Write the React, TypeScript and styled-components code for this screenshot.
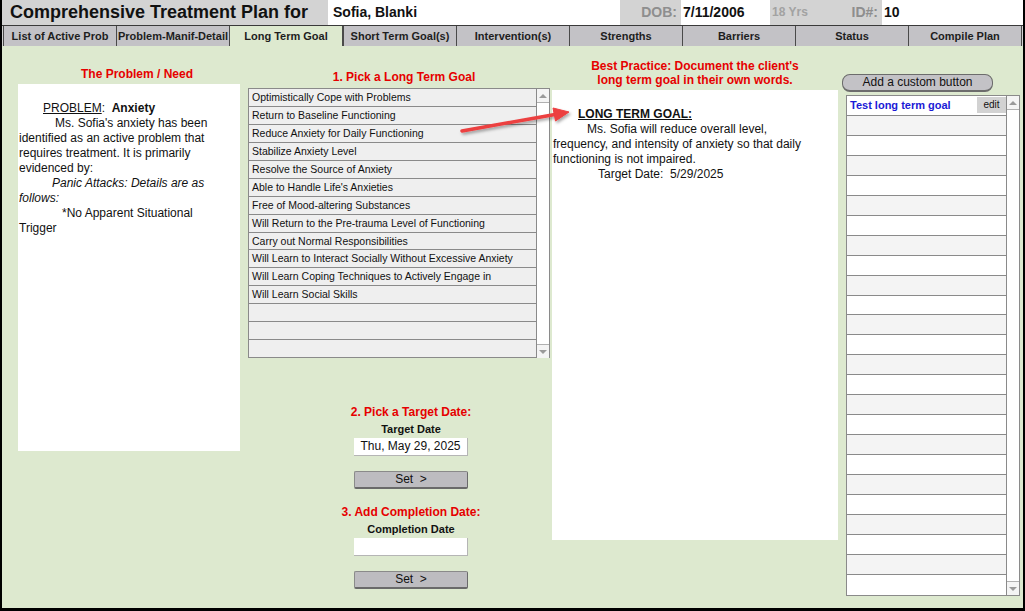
import styled, { createGlobalStyle } from "styled-components";

const GlobalStyle = createGlobalStyle`
  html, body {
    margin: 0;
    padding: 0;
  }
  body {
    font-family: "Liberation Sans", Arial, sans-serif;
    background: #000;
  }
`;

const Frame = styled.div`
  width: 1025px;
  height: 611px;
  box-sizing: border-box;
  border: 2px solid #000;
  border-top: 0;
  border-bottom-width: 3px;
  background: #dde9cf;
  display: flex;
  flex-direction: column;
  overflow: hidden;
`;

const Header = styled.div`
  height: 25px;
  display: flex;
  background: #d3d3d3;
  flex-shrink: 0;
`;

const Title = styled.div`
  width: 326px;
  box-sizing: border-box;
  padding-left: 8px;
  font-size: 18px;
  font-weight: bold;
  line-height: 25px;
  color: #111;
  white-space: nowrap;
`;

const NameField = styled.div`
  width: 292px;
  box-sizing: border-box;
  padding-left: 5px;
  background: #fff;
  font-size: 14px;
  font-weight: bold;
  line-height: 25px;
  color: #111;
`;

const InfoLabel = styled.div<{ $w: number }>`
  width: ${(p) => p.$w}px;
  box-sizing: border-box;
  padding-right: 4px;
  text-align: right;
  font-size: 14px;
  font-weight: bold;
  line-height: 25px;
  color: #8e8e8e;
`;

const InfoGap = styled.div`
  width: 112px;
  box-sizing: border-box;
  display: flex;
  justify-content: space-between;
  padding: 0 4px 0 2px;
  line-height: 25px;
  font-weight: bold;
  color: #8e8e8e;
  .age {
    font-size: 12px;
    color: #a2a2a2;
  }
  .id {
    font-size: 14px;
  }
`;

const InfoValue = styled.div<{ $w?: number }>`
  ${(p) => (p.$w ? `width: ${p.$w}px;` : "flex: 1;")}
  box-sizing: border-box;
  padding-left: 2px;
  background: #fff;
  font-size: 14px;
  font-weight: bold;
  line-height: 25px;
  color: #111;
`;

const TabRow = styled.div`
  height: 21px;
  display: flex;
  padding: 0 1px;
  background: #d3d3d3;
  border-top: 1px solid #3a3a3a;
  box-sizing: border-box;
  flex-shrink: 0;
`;

const Tab = styled.div<{ $active?: boolean }>`
  flex: 1;
  box-sizing: border-box;
  background: ${(p) => (p.$active ? "#dde9cf" : "#c3c2c6")};
  border-left: 1px solid #4a4a4a;
  border-right: ${(p) => (p.$active ? "1px solid #4a4a4a" : "0")};
  font-size: 11px;
  font-weight: bold;
  color: #1e1e1e;
  text-align: center;
  line-height: 20px;
  white-space: nowrap;
  &:last-child {
    border-right: 1px solid #4a4a4a;
  }
`;

const Main = styled.div`
  flex: 1;
  position: relative;
  display: flex;
  align-items: flex-start;
  padding-left: 16px;
`;

const Heading = styled.div<{ $shift?: number }>`
  padding-left: ${(p) => p.$shift ?? 0}px;
  color: #e60000;
  font-size: 12px;
  font-weight: bold;
  line-height: 14px;
  text-align: center;
`;

const Column = styled.div<{ $w: number; $top: number; $gap?: number }>`
  width: ${(p) => p.$w}px;
  padding-top: ${(p) => p.$top}px;
  margin-left: ${(p) => p.$gap ?? 0}px;
  display: flex;
  flex-direction: column;
  flex-shrink: 0;
`;

const MemoBox = styled.div<{ $h: number; $mt: number }>`
  height: ${(p) => p.$h}px;
  margin-top: ${(p) => p.$mt}px;
  background: #fff;
  box-sizing: border-box;
  padding: 17px 20px 0 1px;
  font-size: 12px;
  line-height: 15px;
  color: #111;
`;

const Para = styled.div<{ $indent: number; $italic?: boolean }>`
  text-indent: ${(p) => p.$indent}px;
  font-style: ${(p) => (p.$italic ? "italic" : "normal")};
  white-space: pre-wrap;
`;

const GoalList = styled.div`
  margin-top: 4px;
  height: 270px;
  display: flex;
  border: 1px solid #8a8a8a;
  border-bottom: 0;
  box-sizing: border-box;
  background: #efefef;
`;

const GoalRows = styled.div`
  flex: 1;
  display: flex;
  flex-direction: column;
`;

const GoalRow = styled.div`
  height: 18px;
  box-sizing: border-box;
  border-bottom: 1px solid #8a8a8a;
  padding-left: 3px;
  font-size: 10.5px;
  line-height: 16px;
  color: #111;
  white-space: nowrap;
  overflow: hidden;
`;

const ScrollBar = styled.div<{ $w: number }>`
  width: ${(p) => p.$w}px;
  box-sizing: border-box;
  border-left: 1px solid #8a8a8a;
  background: #fff;
  display: flex;
  flex-direction: column;
  justify-content: space-between;
`;

const ScrollArrow = styled.div<{ $down?: boolean }>`
  height: 14px;
  box-sizing: border-box;
  display: flex;
  align-items: center;
  justify-content: center;
  background: #f4f4f4;
  ${(p) => (p.$down ? "border-top: 1px solid #b0b0b0;" : "border-bottom: 1px solid #b0b0b0;")}
  &::after {
    content: "";
    border-left: 4px solid transparent;
    border-right: 4px solid transparent;
    ${(p) => (p.$down ? "border-top: 4px solid #9a9a9a;" : "border-bottom: 4px solid #9a9a9a;")}
  }
`;

const DateGroup = styled.div`
  display: flex;
  flex-direction: column;
  align-items: center;
  padding-left: 24px;
`;

const StepHeading = styled(Heading)<{ $mt: number }>`
  margin-top: ${(p) => p.$mt}px;
  white-space: nowrap;
`;

const FieldLabel = styled.div`
  margin-top: 4px;
  font-size: 11px;
  font-weight: bold;
  line-height: 12px;
  color: #111;
`;

const DateInput = styled.div`
  margin-top: 3px;
  width: 114px;
  height: 18px;
  box-sizing: border-box;
  background: #fff;
  border-right: 1px solid #b5b5b5;
  border-bottom: 1px solid #b5b5b5;
  font-size: 12px;
  line-height: 17px;
  text-align: center;
  color: #111;
`;

const SetButton = styled.div`
  margin-top: 15px;
  width: 114px;
  height: 18px;
  box-sizing: border-box;
  background: #bdbcc0;
  border: 1px solid #8a8a8a;
  border-right-color: #6a6a6a;
  border-bottom: 2px solid #6a6a6a;
  border-radius: 2px;
  font-size: 12px;
  line-height: 15px;
  text-align: center;
  color: #111;
  white-space: pre;
`;

const AddButton = styled.div`
  width: 151px;
  height: 18px;
  box-sizing: border-box;
  background: #c3c2c6;
  border: 1px solid #6c6c6c;
  border-bottom-width: 2px;
  border-radius: 8px;
  font-size: 12px;
  line-height: 15px;
  text-align: center;
  color: #111;
`;

const CustomList = styled.div`
  margin: 3px 0 0 4px;
  width: 174px;
  height: 501px;
  display: flex;
  border: 1px solid #8a8a8a;
  box-sizing: border-box;
`;

const CustomRow = styled.div<{ $shade: boolean }>`
  height: 20px;
  box-sizing: border-box;
  border-bottom: 1px solid #8a8a8a;
  background: ${(p) => (p.$shade ? "#f4f4f4" : "#fff")};
  display: flex;
  align-items: center;
  padding-left: 3px;
  &:last-child {
    border-bottom: 0;
  }
`;

const CustomName = styled.span`
  flex: 1;
  font-size: 11px;
  font-weight: bold;
  color: #1a1ad6;
`;

const EditButton = styled.span`
  width: 29px;
  height: 16px;
  background: #d2d2d2;
  font-size: 10px;
  line-height: 16px;
  text-align: center;
  color: #111;
`;

const ArrowLayer = styled.svg`
  position: absolute;
  left: 453px;
  top: 54px;
  pointer-events: none;
`;

const tabs = [
  "List of Active Prob",
  "Problem-Manif-Detail",
  "Long Term Goal",
  "Short Term Goal(s)",
  "Intervention(s)",
  "Strengths",
  "Barriers",
  "Status",
  "Compile Plan",
];

const goals = [
  "Optimistically Cope with Problems",
  "Return to Baseline Functioning",
  "Reduce Anxiety for Daily Functioning",
  "Stabilize Anxiety Level",
  "Resolve the Source of Anxiety",
  "Able to Handle Life's Anxieties",
  "Free of Mood-altering Substances",
  "Will Return to the Pre-trauma Level of Functioning",
  "Carry out Normal Responsibilities",
  "Will Learn to Interact Socially Without Excessive Anxiety",
  "Will Learn Coping Techniques to Actively Engage in",
  "Will Learn Social Skills",
  "",
  "",
  "",
];

const customRows = Array.from({ length: 25 }, (_, i) => i);

const App = () => {
  return (
    <>
      <GlobalStyle />
      <Frame>
        <Header>
          <Title>Comprehensive Treatment Plan for</Title>
          <NameField>Sofia, Blanki</NameField>
          <InfoLabel $w={61}>DOB:</InfoLabel>
          <InfoValue $w={89}>7/11/2006</InfoValue>
          <InfoGap>
            <span className="age">18 Yrs</span>
            <span className="id">ID#:</span>
          </InfoGap>
          <InfoValue>10</InfoValue>
        </Header>
        <TabRow>
          {tabs.map((t) => (
            <Tab key={t} $active={t === "Long Term Goal"}>
              {t}
            </Tab>
          ))}
        </TabRow>
        <Main>
          <Column $w={222} $top={21}>
            <Heading $shift={16}>The Problem / Need</Heading>
            <MemoBox $h={367} $mt={3}>
              <Para $indent={24}>
                <u>PROBLEM</u>:  <b>Anxiety</b>
              </Para>
              <Para $indent={36}>
                Ms. Sofia's anxiety has been identified as an active problem that requires
                treatment. It is primarily evidenced by:
              </Para>
              <Para $indent={33} $italic>
                Panic Attacks: Details are as follows:
              </Para>
              <Para $indent={43}>*No Apparent Situational Trigger</Para>
            </MemoBox>
          </Column>

          <Column $w={302} $top={24} $gap={8}>
            <Heading $shift={10}>1. Pick a Long Term Goal</Heading>
            <GoalList>
              <GoalRows>
                {goals.map((g, i) => (
                  <GoalRow key={i}>{g}</GoalRow>
                ))}
              </GoalRows>
              <ScrollBar $w={13}>
                <ScrollArrow />
                <ScrollArrow $down />
              </ScrollBar>
            </GoalList>
            <DateGroup>
              <StepHeading $mt={47}>2. Pick a Target Date:</StepHeading>
              <FieldLabel>Target Date</FieldLabel>
              <DateInput>Thu, May 29, 2025</DateInput>
              <SetButton>{"Set  >"}</SetButton>
              <StepHeading $mt={16}>3. Add Completion Date:</StepHeading>
              <FieldLabel>Completion Date</FieldLabel>
              <DateInput />
              <SetButton>{"Set  >"}</SetButton>
            </DateGroup>
          </Column>

          <Column $w={286} $top={13} $gap={2}>
            <Heading>
              Best Practice: Document the client's
              <br />
              long term goal in their own words.
            </Heading>
            <MemoBox $h={450} $mt={3}>
              <Para $indent={25}>
                <b>
                  <u>LONG TERM GOAL:</u>
                </b>
              </Para>
              <Para $indent={34}>
                Ms. Sofia will reduce overall level, frequency, and intensity of anxiety so
                that daily functioning is not impaired.
              </Para>
              <Para $indent={45}>{"Target Date:  5/29/2025"}</Para>
            </MemoBox>
          </Column>

          <Column $w={178} $top={28} $gap={4}>
            <AddButton>Add a custom button</AddButton>
            <CustomList>
              <GoalRows>
                {customRows.map((i) => (
                  <CustomRow key={i} $shade={i % 2 === 1}>
                    {i === 0 && (
                      <>
                        <CustomName>Test long term goal</CustomName>
                        <EditButton>edit</EditButton>
                      </>
                    )}
                  </CustomRow>
                ))}
              </GoalRows>
              <ScrollBar $w={13}>
                <ScrollArrow />
                <ScrollArrow $down />
              </ScrollBar>
            </CustomList>
          </Column>

          <ArrowLayer width="120" height="40" viewBox="0 0 120 40">
            <defs>
              <filter id="arrowShadow" x="-20%" y="-50%" width="140%" height="200%">
                <feDropShadow dx="1.5" dy="2" stdDeviation="1.5" floodColor="#000" floodOpacity="0.35" />
              </filter>
            </defs>
            <g filter="url(#arrowShadow)" fill="#ec3f3f" stroke="#ec3f3f">
              <line x1="7" y1="31" x2="100" y2="14.5" strokeWidth="3.5" strokeLinecap="round" />
              <polygon points="114,12 100.5,21 98,8" strokeWidth="1" strokeLinejoin="round" />
            </g>
          </ArrowLayer>
        </Main>
      </Frame>
    </>
  );
};

export default App;
